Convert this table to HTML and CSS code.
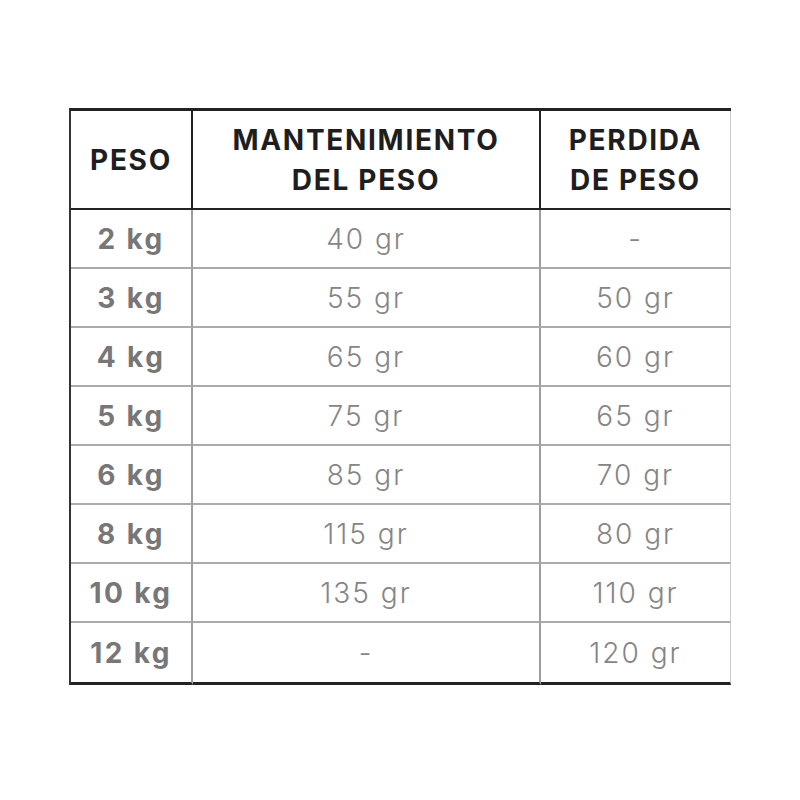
FILE: index.html
```html
<!DOCTYPE html>
<html lang="es">
<head>
<meta charset="utf-8">
<link rel="stylesheet" href="styles.css">
</head>
<body>
<div class="wrap">
<table class="dosis">
  <thead>
    <tr>
      <th class="c1">PESO</th>
      <th class="c2">MANTENIMIENTO<br>DEL PESO</th>
      <th class="c3">PERDIDA<br>DE PESO</th>
    </tr>
  </thead>
  <tbody>
    <tr><td class="kg">2 kg</td><td>40 gr</td><td>-</td></tr>
    <tr><td class="kg">3 kg</td><td>55 gr</td><td>50 gr</td></tr>
    <tr><td class="kg">4 kg</td><td>65 gr</td><td>60 gr</td></tr>
    <tr><td class="kg">5 kg</td><td>75 gr</td><td>65 gr</td></tr>
    <tr><td class="kg">6 kg</td><td>85 gr</td><td>70 gr</td></tr>
    <tr><td class="kg">8 kg</td><td>115 gr</td><td>80 gr</td></tr>
    <tr><td class="kg">10 kg</td><td>135 gr</td><td>110 gr</td></tr>
    <tr class="last"><td class="kg">12 kg</td><td>-</td><td>120 gr</td></tr>
  </tbody>
</table>
</div>
</body>
</html>
```
FILE: styles.css
```css
html, body {
  margin: 0;
  padding: 0;
  background: #ffffff;
}
.wrap {
  padding-top: 108px;
  padding-left: 69px;
}
.dosis {
  border-collapse: separate;
  border-spacing: 0;
  border-top: 3px solid #222222;
  border-left: 2px solid #333333;
  font-family: Inter, "Liberation Sans", sans-serif;
  table-layout: fixed;
}
.dosis th, .dosis td {
  padding: 0;
  text-align: center;
  vertical-align: middle;
  box-sizing: content-box;
}
.dosis th {
  height: 97px;
  font-size: 28px;
  font-weight: 700;
  line-height: 40px;
  color: #1e1e1e;
  letter-spacing: 1.7px;
  border-bottom: 2px solid #222222;
  border-right: 2px solid #222222;
}
.dosis .c1 { width: 120px; }
.dosis .c2 { width: 346px; }
.dosis .c3 { width: 189px; }
.dosis th.c3 { border-right: 1px solid #cccccc; }
.dosis td {
  height: 57px;
  font-size: 28px;
  font-weight: 300;
  color: #858585;
  letter-spacing: 2px;
  border-bottom: 2px solid #ababab;
  border-right: 2px solid #9e9e9e;
}
.dosis td:last-child {
  border-right: 1px solid #cccccc;
}
.dosis td.kg {
  font-weight: 700;
  color: #777777;
  letter-spacing: 2.4px;
}
.dosis tr.last td {
  height: 59px;
  border-bottom: 3px solid #222222;
}
```
